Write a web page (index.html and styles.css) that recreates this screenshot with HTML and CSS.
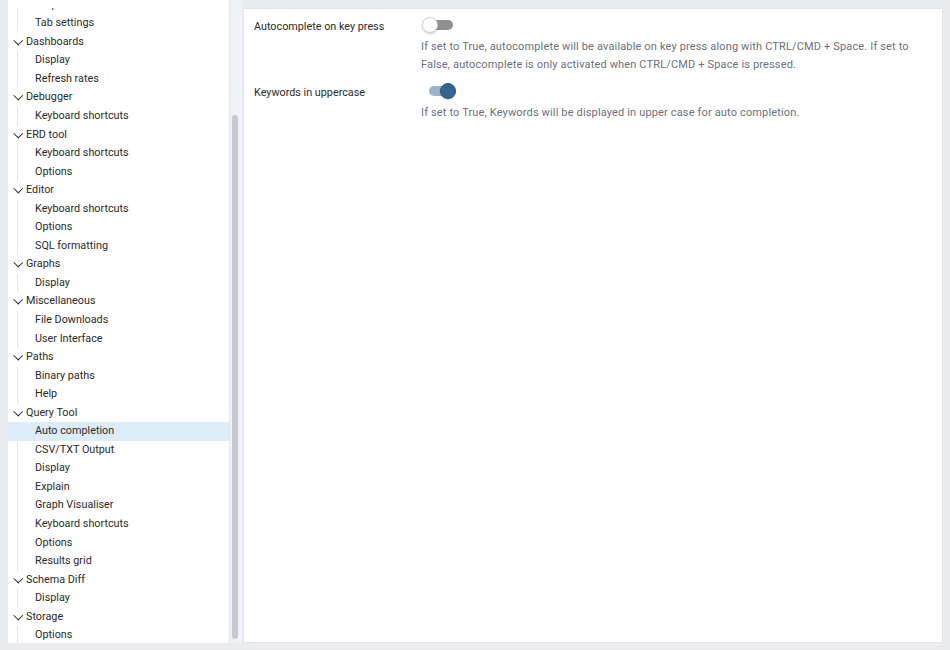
FILE: index.html
```html
<!DOCTYPE html>
<html lang="en">
<head>
    <meta charset="UTF-8">
    <title>Preferences</title>
    <link rel="stylesheet" href="styles.css">
</head>
<body>
    <div class="prefs">
        <div class="tree-pane">
            <div class="tree-scroll">
                <ul class="tree">
                    <li class="group">
                        <ul class="children">
                            <li class="leaf">Properties</li>
                            <li class="leaf">Tab settings</li>
                        </ul>
                    </li>
                    <li class="group">
                        <div class="node"><span class="chev"></span>Dashboards</div>
                        <ul class="children">
                            <li class="leaf">Display</li>
                            <li class="leaf">Refresh rates</li>
                        </ul>
                    </li>
                    <li class="group">
                        <div class="node"><span class="chev"></span>Debugger</div>
                        <ul class="children">
                            <li class="leaf">Keyboard shortcuts</li>
                        </ul>
                    </li>
                    <li class="group">
                        <div class="node"><span class="chev"></span>ERD tool</div>
                        <ul class="children">
                            <li class="leaf">Keyboard shortcuts</li>
                            <li class="leaf">Options</li>
                        </ul>
                    </li>
                    <li class="group">
                        <div class="node"><span class="chev"></span>Editor</div>
                        <ul class="children">
                            <li class="leaf">Keyboard shortcuts</li>
                            <li class="leaf">Options</li>
                            <li class="leaf">SQL formatting</li>
                        </ul>
                    </li>
                    <li class="group">
                        <div class="node"><span class="chev"></span>Graphs</div>
                        <ul class="children">
                            <li class="leaf">Display</li>
                        </ul>
                    </li>
                    <li class="group">
                        <div class="node"><span class="chev"></span>Miscellaneous</div>
                        <ul class="children">
                            <li class="leaf">File Downloads</li>
                            <li class="leaf">User Interface</li>
                        </ul>
                    </li>
                    <li class="group">
                        <div class="node"><span class="chev"></span>Paths</div>
                        <ul class="children">
                            <li class="leaf">Binary paths</li>
                            <li class="leaf">Help</li>
                        </ul>
                    </li>
                    <li class="group">
                        <div class="node"><span class="chev"></span>Query Tool</div>
                        <ul class="children">
                            <li class="leaf selected">Auto completion</li>
                            <li class="leaf">CSV/TXT Output</li>
                            <li class="leaf">Display</li>
                            <li class="leaf">Explain</li>
                            <li class="leaf">Graph Visualiser</li>
                            <li class="leaf">Keyboard shortcuts</li>
                            <li class="leaf">Options</li>
                            <li class="leaf">Results grid</li>
                        </ul>
                    </li>
                    <li class="group">
                        <div class="node"><span class="chev"></span>Schema Diff</div>
                        <ul class="children">
                            <li class="leaf">Display</li>
                        </ul>
                    </li>
                    <li class="group">
                        <div class="node"><span class="chev"></span>Storage</div>
                        <ul class="children">
                            <li class="leaf">Options</li>
                        </ul>
                    </li>
                </ul>
            </div>
            <div class="scrollbar"><div class="thumb"></div></div>
        </div>

        <div class="form-pane">
            <div class="setting">
                <div class="setting-label">Autocomplete on key press</div>
                <div class="setting-control">
                    <span class="switch"><span class="track"></span><span class="knob"></span></span>
                    <p class="help">If set to True, autocomplete will be available on key press along with CTRL/CMD + Space. If set to False, autocomplete is only activated when CTRL/CMD + Space is pressed.</p>
                </div>
            </div>
            <div class="setting">
                <div class="setting-label">Keywords in uppercase</div>
                <div class="setting-control">
                    <span class="switch on"><span class="track"></span><span class="knob"></span></span>
                    <p class="help">If set to True, Keywords will be displayed in upper case for auto completion.</p>
                </div>
            </div>
        </div>
    </div>
</body>
</html>
```

FILE: styles.css
```css
body {
    margin: 0;
    background-color: #ebecf0;
    font-family: Roboto, 'Liberation Sans', sans-serif;
    font-size: 10.8px;
    color: #2a2a2a;
    overflow: hidden;
}

.prefs {
    display: flex;
    height: 643px;
    padding-left: 8px;
}

/* 왼쪽 트리 */
.tree-pane {
    display: flex;
    width: 234px;
    background-color: #fff;
}

.tree-scroll {
    width: 222px;
    margin-top: 7.5px; /* 위쪽은 스크롤로 잘려 있음 */
    overflow: hidden;
}

.tree,
.children {
    list-style: none;
    margin: 0;
    padding: 0;
}

.tree {
    margin-top: -11.8px;
}

.node,
.leaf {
    height: 18.55px;
    line-height: 18.55px;
    white-space: nowrap;
}

.node {
    display: flex;
    align-items: center;
    padding-left: 5px;
}

.chev {
    width: 5.5px;
    height: 5.5px;
    border-right: 1.4px solid #2a2a2a;
    border-bottom: 1.4px solid #2a2a2a;
    transform: translateY(-2px) rotate(45deg);
    margin-right: 5px;
    margin-left: 1.5px;
}

.children {
    margin-left: 9px;
    border-left: 1px solid #e3e5ea;
}

.leaf {
    margin-left: -10px;
    padding-left: 27px;
}

.leaf.selected {
    background-color: #dcedf8;
}

.scrollbar {
    width: 12px;
    background-color: #f1f2f5;
    border-left: 1px solid #e6e8ec;
    position: relative;
}

.thumb {
    position: absolute;
    left: 2px;
    top: 115px;
    bottom: 4px;
    width: 6px;
    border-radius: 3px;
    background-color: #c6c9d1;
}

/* 오른쪽 설정 폼 */
.form-pane {
    flex: 1;
    margin: 8px 7px 0 1px;
    background-color: #fff;
    border: 1px solid #e2e4e9;
    padding: 3px 10px 0;
}

.setting {
    display: grid;
    grid-template-columns: 167px 1fr;
    margin-bottom: 4px;
}

.setting-label {
    line-height: 24px;
    padding-top: 2.5px;
}

.switch {
    display: block;
    position: relative;
    width: 36px;
    height: 26px;
}

.track {
    position: absolute;
    left: 6px;
    top: 8px;
    width: 26px;
    height: 10px;
    border-radius: 5px;
    background-color: #909090;
}

.knob {
    position: absolute;
    left: 1px;
    top: 5px;
    width: 16px;
    height: 16px;
    box-sizing: border-box;
    border-radius: 50%;
    background-color: #fff;
    border: 1px solid #d4d4d4;
    box-shadow: 0 1px 2px rgba(0, 0, 0, 0.2);
}

.switch.on .track {
    left: 8px;
    background-color: #9cb3cb;
}

.switch.on .knob {
    left: 19px;
    background-color: #326592;
    border-color: #2a5580;
}

.help {
    margin: 0;
    font-size: 11px;
    line-height: 18px;
    color: #6b7080;
    letter-spacing: 0.15px;
}
```
